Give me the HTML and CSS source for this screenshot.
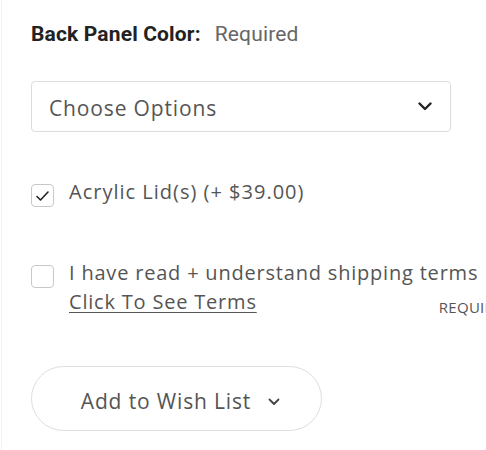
FILE: index.html
```html
<!DOCTYPE html>
<html lang="en">
<head>
<meta charset="utf-8">
<link rel="stylesheet" href="styles.css">
</head>
<body>
<div class="page">
  <form class="form">
    <div class="field">
      <div class="label"><span class="label-name">Back Panel Color:</span><span class="label-req">Required</span></div>
      <div class="select">
        <span class="select-text">Choose Options</span>
        <svg class="select-chevron" width="14" height="9" viewBox="0 0 14 9"><path d="M1.5 1.5 L7 7 L12.5 1.5" fill="none" stroke="#222" stroke-width="2.4" stroke-linecap="round" stroke-linejoin="round"/></svg>
      </div>
    </div>

    <div class="check-row check-row-first">
      <span class="box"><svg width="15" height="12" viewBox="0 0 15 12"><path d="M2 6.5 L5.5 10 L13 2" fill="none" stroke="#222" stroke-width="1.6" stroke-linecap="round" stroke-linejoin="round"/></svg></span>
      <span class="check-text">Acrylic Lid(s) (+ $39.00)</span>
    </div>

    <div class="check-row check-row-terms">
      <span class="box"></span>
      <div class="terms">
        <span class="check-text terms-text">I have read + understand shipping terms</span>
        <div class="terms-line">
          <a class="terms-link" href="#">Click To See Terms</a>
          <span class="req-tag">REQUIRED</span>
        </div>
      </div>
    </div>

    <button type="button" class="wish">
      <span>Add to Wish List</span>
      <svg class="wish-chevron" width="12" height="8" viewBox="0 0 12 8"><path d="M1.5 1.5 L6 6 L10.5 1.5" fill="none" stroke="#444" stroke-width="1.8" stroke-linecap="round" stroke-linejoin="round"/></svg>
    </button>
  </form>
</div>
</body>
</html>
```

FILE: styles.css
```css
html, body {
  margin: 0;
  padding: 0;
  background: #fff;
}
body {
  width: 486px;
  height: 450px;
  overflow: hidden;
}
.page {
  border-left: 1px solid #f1f1f1;
  margin-left: 1px;
  height: 450px;
  box-sizing: border-box;
  padding: 21px 0 0 29px;
  font-family: "Open Sans", sans-serif;
  color: #555;
}
.form {
  display: flex;
  flex-direction: column;
  width: 520px;
}
.label {
  display: flex;
  align-items: baseline;
  font-family: Roboto, sans-serif;
  font-size: 21px;
  line-height: 26px;
  letter-spacing: 0.15px;
}
.label-name {
  font-weight: 700;
  color: #222;
}
.label-req {
  margin-left: 14px;
  color: #666;
}
.select {
  margin-top: 34px;
  width: 420px;
  height: 51px;
  box-sizing: border-box;
  border: 1px solid #dcdcdc;
  border-radius: 4px;
  display: flex;
  align-items: center;
  justify-content: space-between;
  padding: 0 18px 0 17px;
}
.select-text {
  font-size: 21px;
  color: #555;
  letter-spacing: 0.85px;
  margin-top: 2px;
}
.check-row {
  display: flex;
  align-items: flex-start;
}
.check-row-first {
  margin-top: 50px;
}
.check-row-terms {
  margin-top: 56px;
}
.box {
  flex: none;
  width: 23px;
  height: 23px;
  box-sizing: border-box;
  border: 1px solid #c8c8c8;
  border-radius: 4px;
  display: flex;
  align-items: center;
  justify-content: center;
  margin-top: 2px;
  margin-right: 15px;
}
.check-text {
  font-size: 20px;
  line-height: 27px;
  color: #555;
  letter-spacing: 1px;
  margin-top: -4px;
}
.terms-text {
  letter-spacing: 0.8px;
}
.terms {
  display: flex;
  flex-direction: column;
}
.terms-line {
  display: flex;
  align-items: flex-start;
}
.terms-link {
  font-size: 20px;
  line-height: 31px;
  color: #555;
  text-decoration: underline;
  text-underline-offset: 3px;
  text-decoration-thickness: 1px;
  letter-spacing: 0.8px;
}
.req-tag {
  margin-left: 182px;
  margin-top: 12px;
  font-size: 15px;
  line-height: 18px;
  color: #555;
  letter-spacing: 0.3px;
}
.wish {
  margin-top: 49px;
  width: 291px;
  height: 65px;
  border: 1px solid #dedede;
  border-radius: 33px;
  background: #fff;
  display: flex;
  align-items: center;
  justify-content: center;
  gap: 17px;
  font-family: "Open Sans", sans-serif;
  font-size: 21px;
  color: #555;
  letter-spacing: 0.85px;
  padding: 4px 0 0 8px;
  cursor: pointer;
}
.wish-chevron {
  margin-top: 3px;
}
```
